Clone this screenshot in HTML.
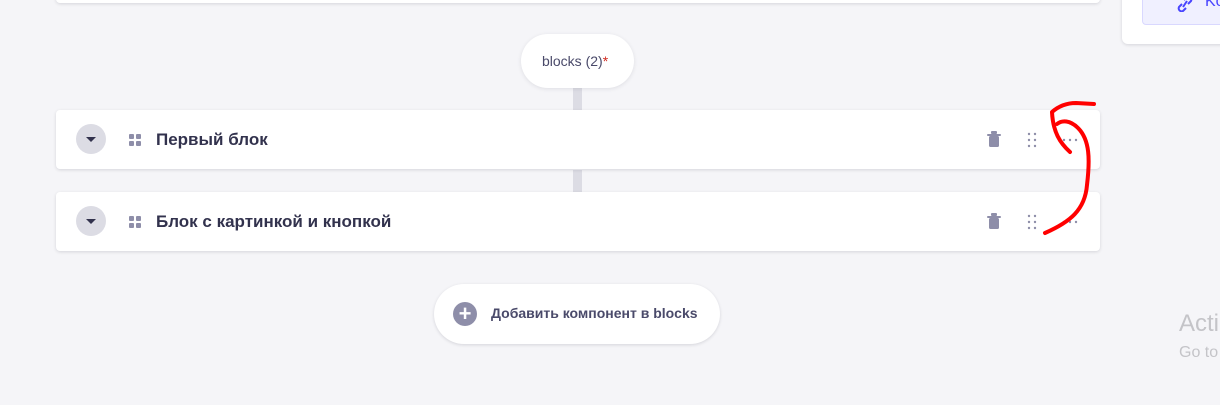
<!DOCTYPE html>
<html><head><style>
body{margin:0;width:1220px;height:405px;background:#f5f5f8;font-family:"Liberation Sans",sans-serif;position:relative;overflow:hidden}
.card{position:absolute;background:#fff;border-radius:4px;box-shadow:0 1px 3px rgba(33,33,52,.15)}
.row{left:56px;width:1044px;height:59px}
.tog{position:absolute;left:20px;top:14px;width:30px;height:30px;border-radius:50%;background:#dcdce4}
.tog:after{content:"";position:absolute;left:10px;top:13px;border-left:5px solid transparent;border-right:5px solid transparent;border-top:5px solid #32324d}
.grid{position:absolute;left:73px;top:24px;width:12px;height:12px}
.grid i{position:absolute;width:5px;height:5px;background:#8e8ea9;border-radius:1px}
.t{position:absolute;left:100px;top:20px;font-size:17px;font-weight:bold;color:#32324d}
.bar{position:absolute;left:573px;width:9px;background:#dcdce4}
</style></head><body>
<div class="card" style="left:56px;top:-10px;width:1044px;height:13px"></div>
<div class="card" style="left:1122px;top:-10px;width:110px;height:54px;border-radius:6px"></div>
<div style="position:absolute;left:1142px;top:-10px;width:90px;height:33px;background:#f0f0ff;border:1px solid #d9d8ff;border-radius:4px"></div>
<svg style="position:absolute;left:1176px;top:-4px" width="18" height="16" viewBox="0 0 18 16"><path d="M8 4 L11 1 a3 3 0 0 1 4 4 L12 8 M10 12 L7 15 a3 3 0 0 1 -4 -4 L6 8 M7 11 L11 5" stroke="#4945ff" stroke-width="2" fill="none"/></svg>
<div style="position:absolute;left:1205px;top:-7px;font-size:16px;color:#4945ff">Ko</div>
<div class="bar" style="top:80px;height:30px"></div>
<div class="bar" style="top:170px;height:22px"></div>
<div class="card" style="left:521px;top:34px;width:113px;height:54px;border-radius:27px;box-shadow:0 1px 4px rgba(33,33,52,.1)"></div>
<div style="position:absolute;left:542px;top:53px;font-size:14px;color:#4a4a6a">blocks (2)<span style="color:#d02b20">*</span></div>
<div class="card row" style="top:110px"><div class="tog"></div><div class="grid"><i style="left:0;top:0"></i><i style="left:7px;top:0"></i><i style="left:0;top:7px"></i><i style="left:7px;top:7px"></i></div><div class="t">Первый блок</div></div>
<div class="card row" style="top:192px"><div class="tog"></div><div class="grid"><i style="left:0;top:0"></i><i style="left:7px;top:0"></i><i style="left:0;top:7px"></i><i style="left:7px;top:7px"></i></div><div class="t">Блок с картинкой и кнопкой</div></div>
<svg style="position:absolute;left:0;top:0" width="1220" height="405">
<g fill="#8e8ea9">
<rect x="987" y="134" width="14" height="2" rx="1"/><rect x="989" y="136" width="10" height="11" rx="1.5"/><rect x="991" y="131" width="6" height="3" rx="1"/>
<rect x="987" y="216" width="14" height="2" rx="1"/><rect x="989" y="218" width="10" height="11" rx="1.5"/><rect x="991" y="213" width="6" height="3" rx="1"/>
<circle cx="1029" cy="134" r="1.2"/><circle cx="1035" cy="134" r="1.2"/><circle cx="1029" cy="140" r="1.2"/><circle cx="1035" cy="140" r="1.2"/><circle cx="1029" cy="146" r="1.2"/><circle cx="1035" cy="146" r="1.2"/>
<circle cx="1029" cy="216" r="1.2"/><circle cx="1035" cy="216" r="1.2"/><circle cx="1029" cy="222" r="1.2"/><circle cx="1035" cy="222" r="1.2"/><circle cx="1029" cy="228" r="1.2"/><circle cx="1035" cy="228" r="1.2"/>
<circle cx="1064" cy="140" r="1.2"/><circle cx="1070" cy="140" r="1.2"/><circle cx="1076" cy="140" r="1.2"/>
<circle cx="1064" cy="222" r="1.2"/><circle cx="1070" cy="222" r="1.2"/><circle cx="1076" cy="222" r="1.2"/>
</g>
<g fill="#bbb" fill-opacity="0"><rect/></g>
</svg>
<div class="card" style="left:434px;top:284px;width:286px;height:60px;border-radius:30px"></div>
<div style="position:absolute;left:453px;top:302px;width:24px;height:24px;border-radius:50%;background:#8e8ea9;color:#fff;font-size:22px;line-height:23px;text-align:center;font-weight:bold">+</div>
<div style="position:absolute;left:491px;top:305px;font-size:14px;font-weight:bold;color:#4a4a6a">Добавить компонент в blocks</div>
<div style="position:absolute;left:1179px;top:310px;font-size:24px;color:#c4c4c8">Acti</div>
<div style="position:absolute;left:1179px;top:344px;font-size:16px;color:#c4c4c8">Go to</div>
<svg style="position:absolute;left:0;top:0" width="1220" height="405">
<path d="M1045 233 C1070 222 1085 210 1087 185 C1090 160 1090 140 1078 128 C1070 120 1062 120 1057 124" stroke="#f00" stroke-width="4" fill="none" stroke-linecap="round"/>
<path d="M1070 152 C1060 143 1053 132 1052 112 C1060 105 1068 103 1076 103 L1094 104" stroke="#f00" stroke-width="4" fill="none" stroke-linecap="round" stroke-linejoin="round"/>
</svg>
</body></html>
